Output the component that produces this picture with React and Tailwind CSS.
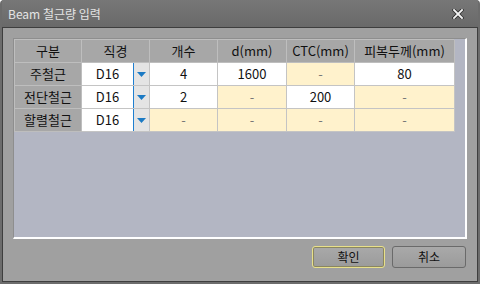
import React from "react";

const font = { fontFamily: '"Noto Sans CJK KR", "Noto Sans", sans-serif' };

function Cell({ children, bg = "bg-white", className = "" }) {
  return (
    <div className={`flex items-center justify-center border-r border-b border-[#c4c4c4] text-[13px] text-[#111] ${bg} ${className}`}>
      {children}
    </div>
  );
}

function Head({ children, className = "" }) {
  return (
    <div className={`flex items-center justify-center border-r border-b border-[#bebebe] bg-[#a7a7a7] text-[13px] text-[#111] ${className}`}>
      {children}
    </div>
  );
}

function Combo() {
  return (
    <div className="flex items-stretch border-r border-b border-[#c4c4c4] bg-white">
      <div className="flex flex-1 items-center justify-center text-[13px] text-[#111]">D16</div>
      <div className="flex w-[16px] items-center justify-center border-l border-[#1f7fd0] bg-[#e4e4e4]">
        <svg width="9" height="5" viewBox="0 0 9 5">
          <polygon points="0,0 9,0 4.5,5" fill="#1b7ac4" />
        </svg>
      </div>
    </div>
  );
}

const Y = "bg-[#fff2cc]";

export default function App() {
  const rows = [
    { name: "주철근", cells: [["4", "bg-white"], ["1600", "bg-white"], ["-", Y], ["80", "bg-white"]] },
    { name: "전단철근", cells: [["2", "bg-white"], ["-", Y], ["200", "bg-white"], ["-", Y]] },
    { name: "할렬철근", cells: [["-", Y], ["-", Y], ["-", Y], ["-", Y]] },
  ];
  return (
    <div style={font} className="flex h-[284px] w-[480px] flex-col overflow-hidden rounded-t-[4px] bg-[#6c6c6c] px-[2px] pb-[2px]">
      <div className="flex h-[27px] shrink-0 items-center justify-between bg-gradient-to-b from-[#777777] to-[#696969] pl-[6px] pr-[14px]">
        <span className="text-[12px] text-[#e4e4e4]">Beam 철근량 입력</span>
        <svg width="12" height="10" viewBox="0 0 12 10">
          <path d="M2 1 L10 9 M10 1 L2 9" stroke="#333" strokeWidth="3.6" strokeLinecap="square" />
          <path d="M2 1 L10 9 M10 1 L2 9" stroke="#f4f4f4" strokeWidth="1.8" strokeLinecap="square" />
        </svg>
      </div>
      <div className="flex flex-1 flex-col border border-[#3e3e3e] bg-[#a0a0a0] px-[10px] pt-[10px]">
        <div className="h-[201px] border-t border-l border-[#8e8e8e] border-r-2 border-b-2 border-r-white border-b-white bg-[#b3b6c3]">
          <div className="grid grid-cols-[67px_68px_68px_69px_68px_100px] grid-rows-[23px_23px_23px_23px] w-[440px] border-l border-t border-[#bebebe]">
            <Head>구분</Head>
            <Head>직경</Head>
            <Head>개수</Head>
            <Head>d(mm)</Head>
            <Head>CTC(mm)</Head>
            <Head>피복두께(mm)</Head>
            {rows.map((r) => (
              <React.Fragment key={r.name}>
                <Head>{r.name}</Head>
                <Combo />
                {r.cells.map(([t, bg], i) => (
                  <Cell key={i} bg={bg}>
                    {t === "-" ? <span className="text-[#777]">-</span> : t}
                  </Cell>
                ))}
              </React.Fragment>
            ))}
          </div>
        </div>
        <div className="mt-[7px] flex justify-end gap-[7px] pr-[1px]">
          <button className="h-[22px] w-[73px] rounded-[3px] border border-[#e8e08a] bg-gradient-to-b from-[#a9a9a9] to-[#9b9b9b] text-[12px] text-[#111] shadow-[inset_0_0_0_1px_#8a8660]">
            확인
          </button>
          <button className="h-[22px] w-[74px] rounded-[3px] border border-[#6a6a6a] bg-gradient-to-b from-[#a9a9a9] to-[#9b9b9b] text-[12px] text-[#111]">
            취소
          </button>
        </div>
      </div>
    </div>
  );
}
